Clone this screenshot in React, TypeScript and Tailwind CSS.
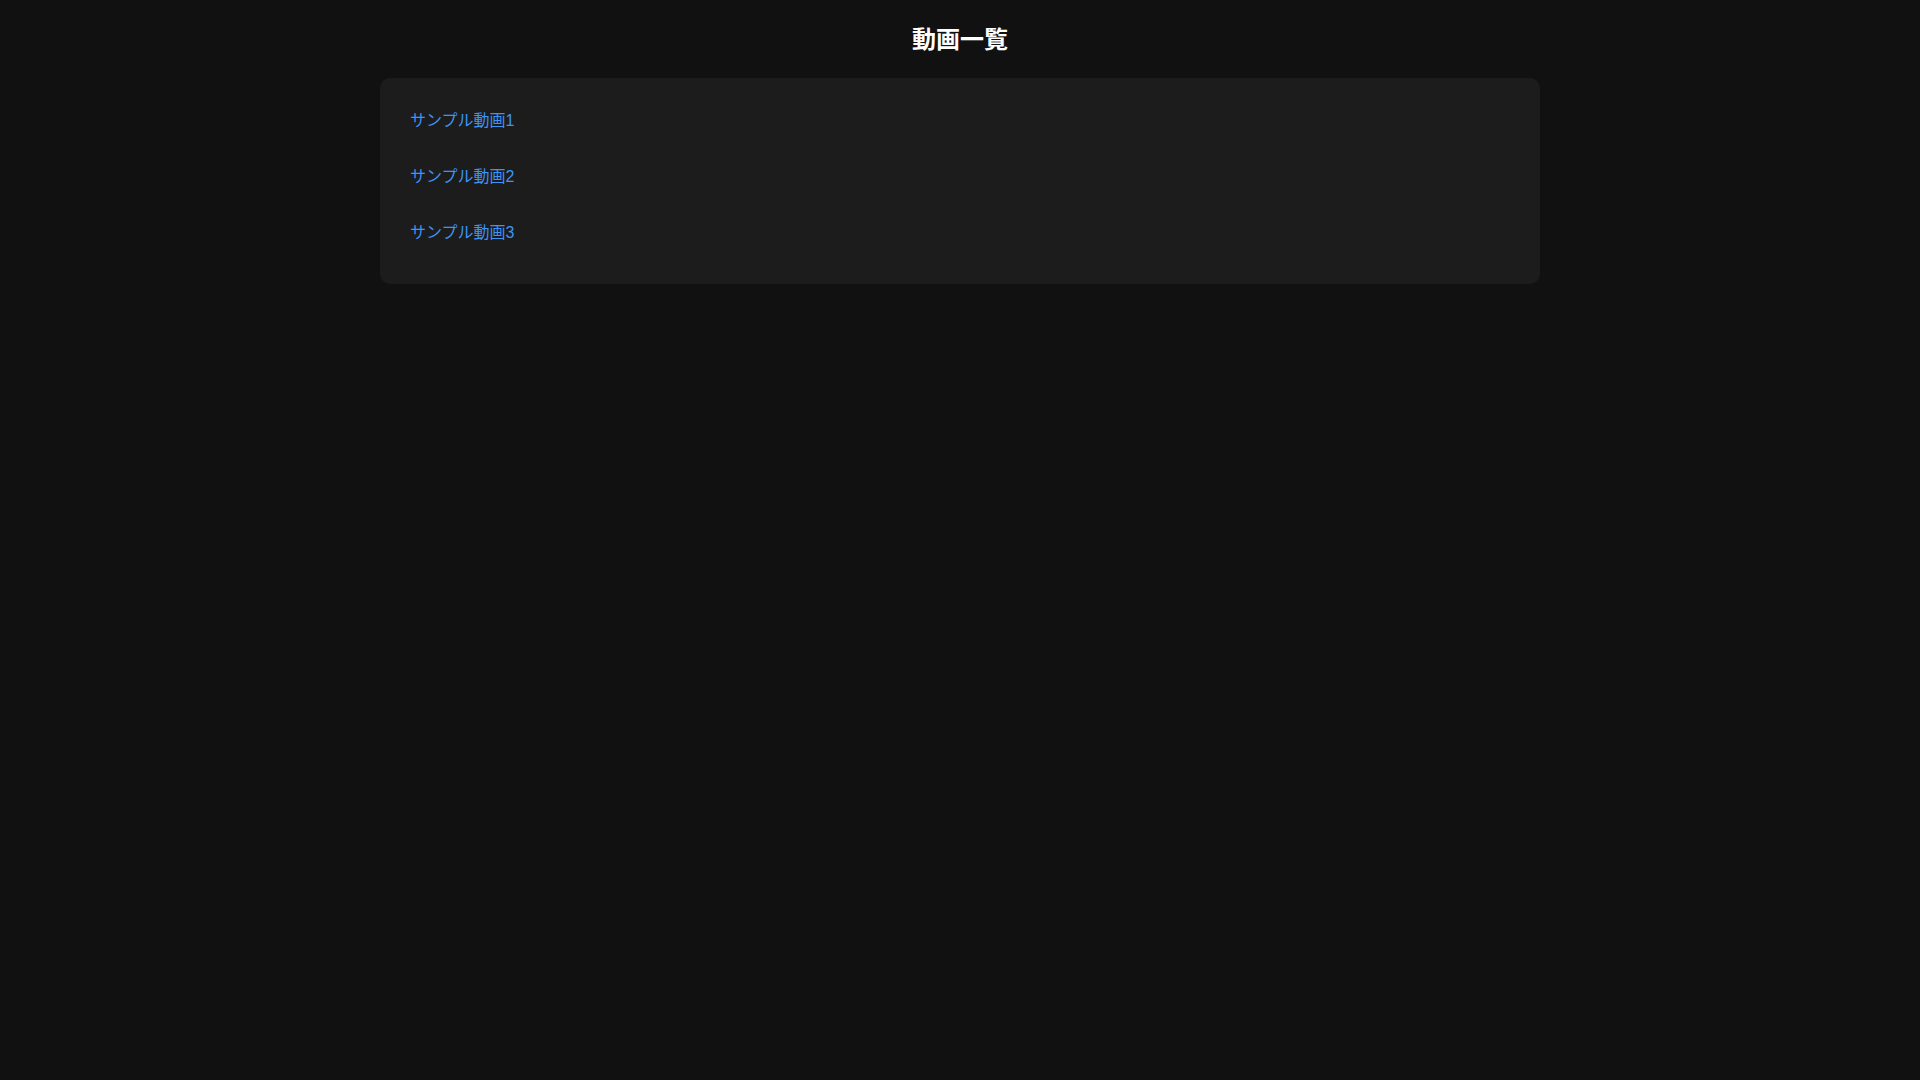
const videos = [
  { id: 1, title: "サンプル動画1" },
  { id: 2, title: "サンプル動画2" },
  { id: 3, title: "サンプル動画3" },
];

export default function App() {
  return (
    <div className="min-h-screen bg-[#111111] text-white font-['Liberation_Sans','Noto_Sans_CJK_JP',sans-serif]">
      <div className="mx-auto max-w-[1200px] px-5 pt-6 pb-5">
        <h1 className="mb-[22px] text-center text-2xl font-bold leading-8">動画一覧</h1>

        {/* Video list */}
        <ul className="rounded-[10px] bg-[#1c1c1c] px-[30px] pt-[21px] pb-[17px]">
          {videos.map((v) => (
            <li key={v.id} className="mb-3 py-[10px] leading-6">
              <a href="#" className="text-base text-[#3d94f6]">
                {v.title}
              </a>
            </li>
          ))}
        </ul>
      </div>
    </div>
  );
}
